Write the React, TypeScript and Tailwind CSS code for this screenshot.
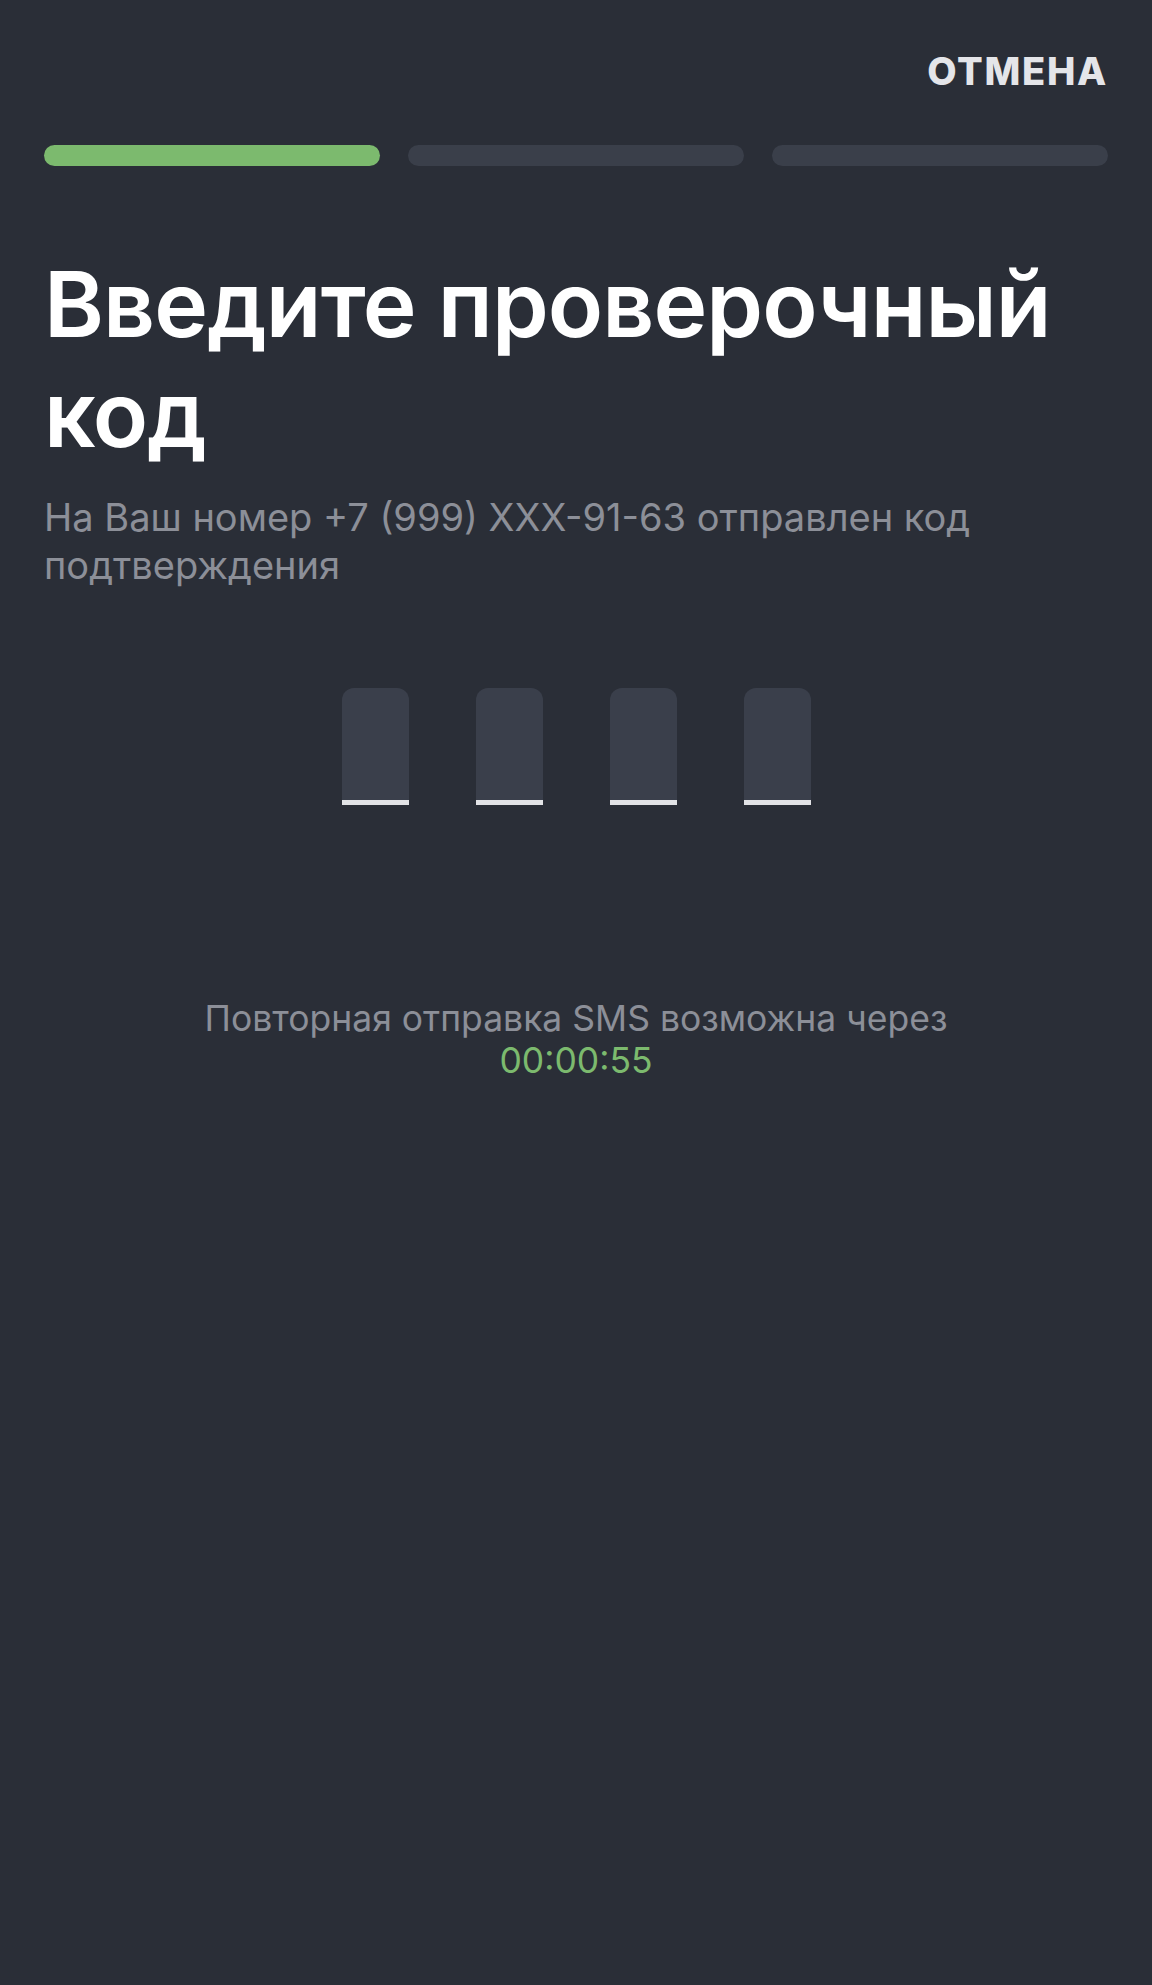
const steps = [true, false, false];
const cells = ["", "", "", ""];

export default function App() {
  return (
    <div
      className="min-h-[1985px] w-full bg-[#2a2e37] px-[44px] text-white"
      style={{ fontFamily: "Inter, 'Noto Sans', sans-serif" }}
    >
      <div className="flex justify-end pt-[48px]">
        <button className="text-[38px] font-extrabold leading-[46px] tracking-[0.045em] text-[#e4e5e9]">
          ОТМЕНА
        </button>
      </div>

      <div className="mt-[51px] flex gap-[28px]">
        {steps.map((done, i) => (
          <div
            key={i}
            className={`h-[21px] flex-1 rounded-full ${done ? "bg-[#7cba6e]" : "bg-[#3a3f4a]"}`}
          />
        ))}
      </div>

      <h1 className="mt-[83px] text-[91px] font-semibold leading-[110px] tracking-[-0.01em] text-white">
        Введите проверочный код
      </h1>

      <p className="mt-[24px] text-[38px] leading-[48px] text-[#8c8f98]">
        На Ваш номер +7 (999) XXX-91-63 отправлен код подтверждения
      </p>

      <div className="mt-[99px] flex justify-center gap-[67px]">
        {cells.map((c, i) => (
          <div
            key={i}
            className="flex h-[117px] w-[67px] items-end overflow-hidden rounded-t-[12px] bg-[#3a3f4b]"
          >
            <span className="sr-only">{c}</span>
            <div className="h-[5px] w-full bg-[#e2e3e6]" />
          </div>
        ))}
      </div>

      <div className="mt-[193px] text-center text-[35.5px] leading-[42px]">
        <p className="text-[#8c8f98]">Повторная отправка SMS возможна через</p>
        <p className="text-[#7cba6e]">00:00:55</p>
      </div>
    </div>
  );
}
